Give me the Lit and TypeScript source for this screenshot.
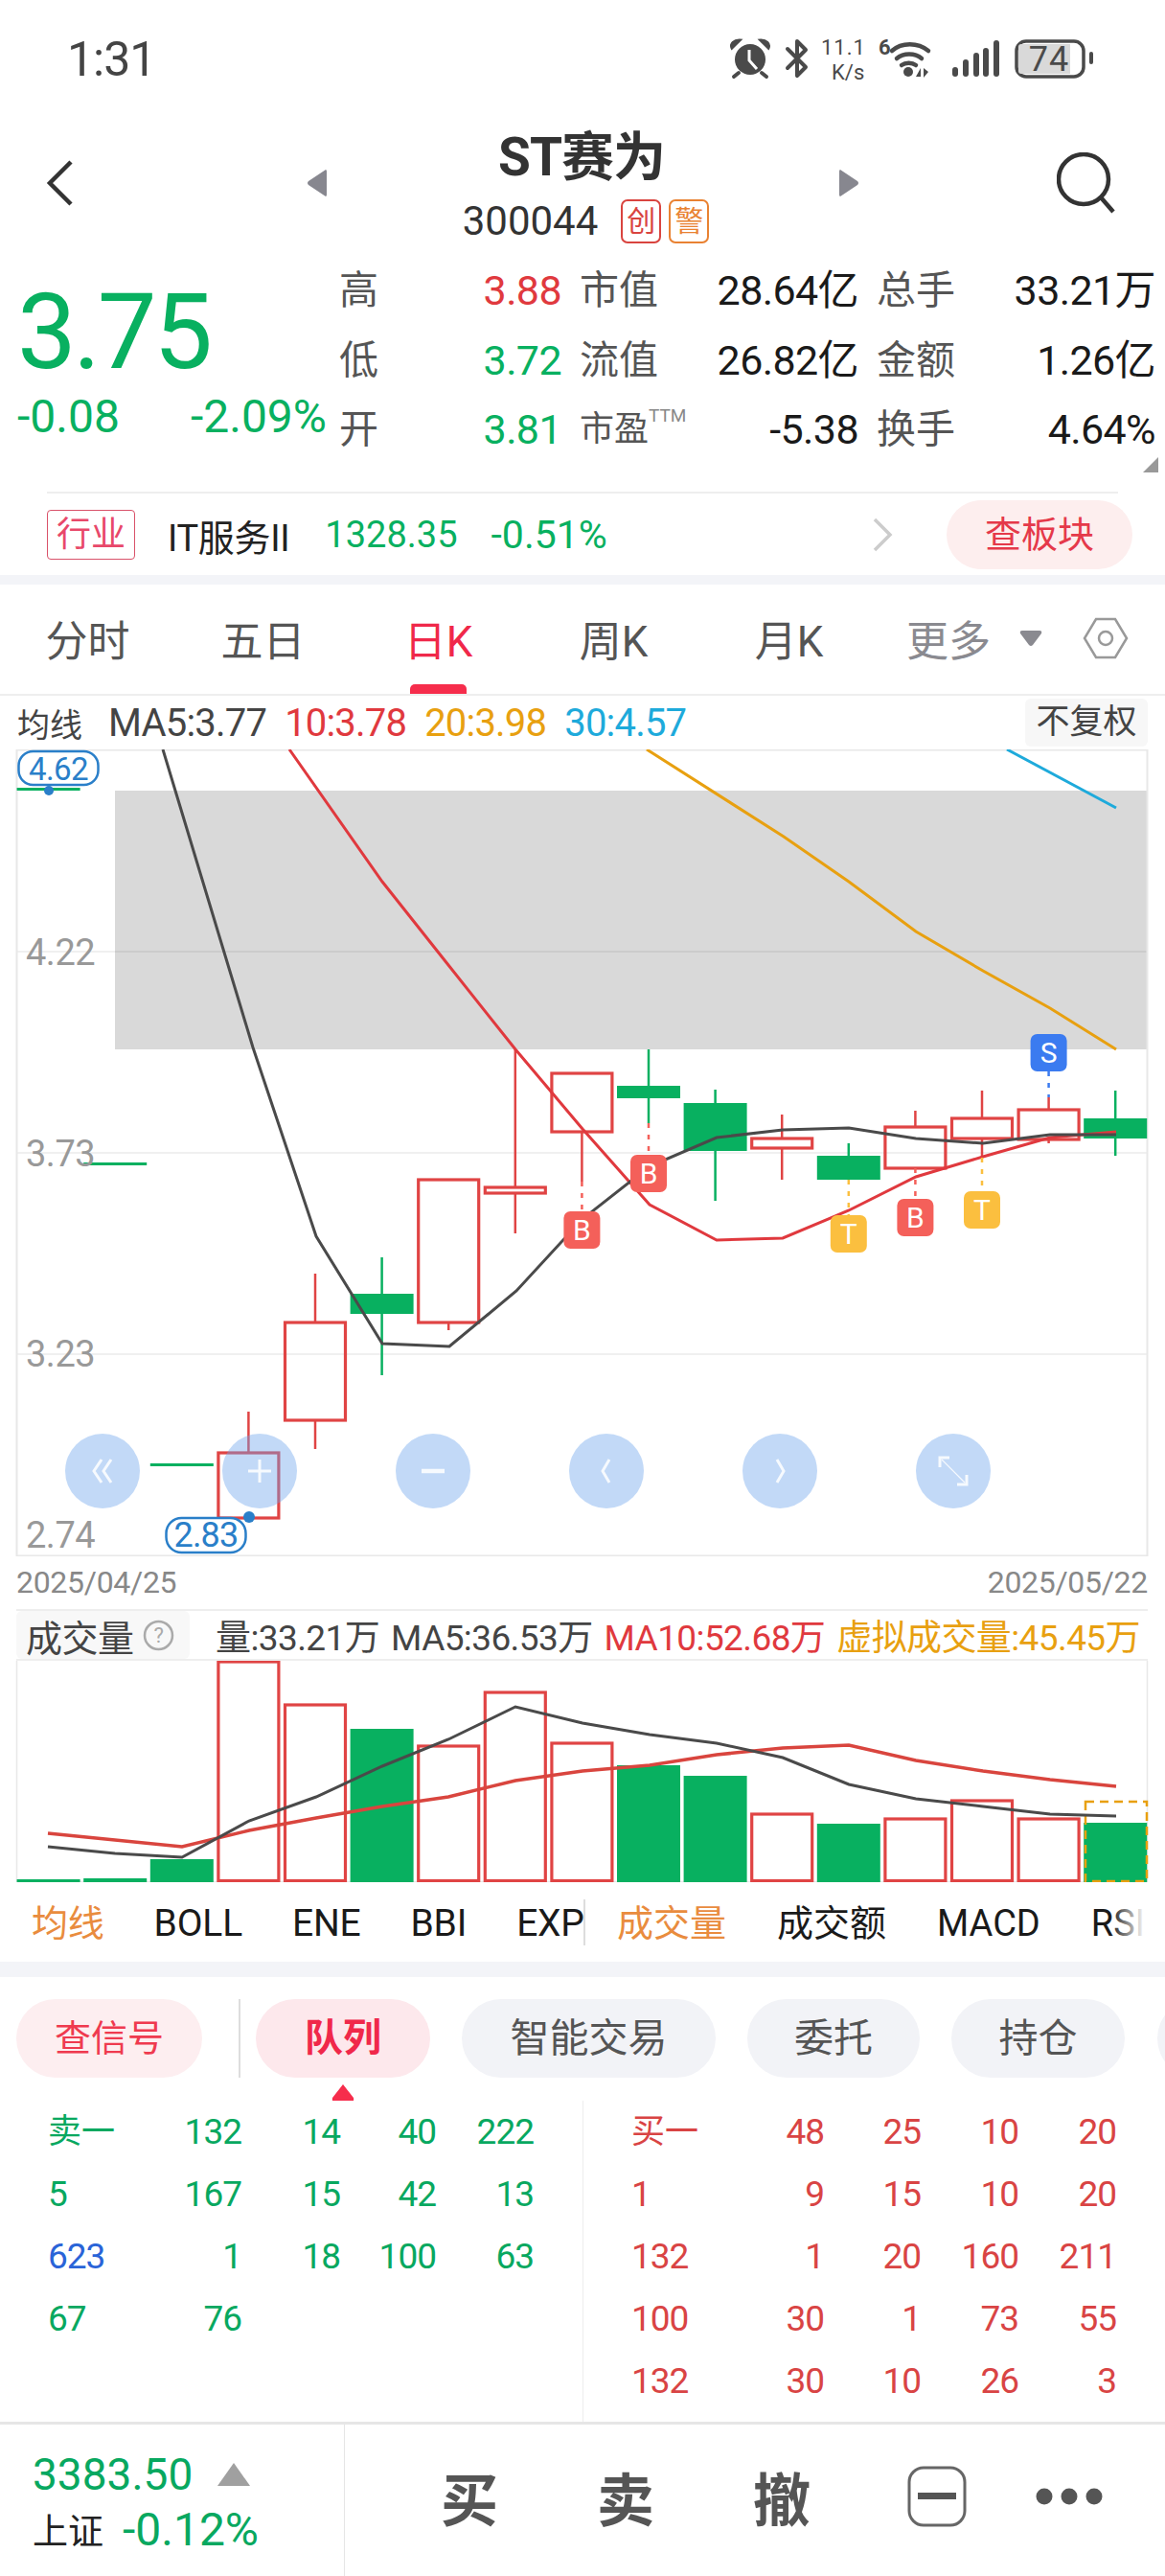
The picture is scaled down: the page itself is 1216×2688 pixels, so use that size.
import { LitElement, html, css, svg } from "lit";
import { customElement } from "lit/decorators.js";

const C = (i: number) => 50.6 + 69.6 * i;
const RED = "#e04444";
const GREEN = "#08b060";

// [index, hollow, bodyTop, bodyBottom, wickTop, wickBottom]
const candles: [number, boolean, number, number, number, number][] = [
  [0, false, 822, 825, 822, 825],
  [1, false, 1213, 1216, 1213, 1216],
  [2, false, 1527, 1530, 1527, 1530],
  [3, true, 1516, 1584, 1473, 1584],
  [4, true, 1380, 1482, 1329, 1512],
  [5, false, 1350, 1371, 1312, 1435],
  [6, true, 1231, 1380, 1231, 1388],
  [7, true, 1239, 1245, 1095, 1287],
  [8, true, 1120, 1181, 1120, 1233],
  [9, false, 1133, 1146, 1095, 1172],
  [10, false, 1151, 1201, 1137, 1253],
  [11, true, 1188, 1198, 1163, 1231],
  [12, false, 1206, 1231, 1193, 1231],
  [13, true, 1176, 1219, 1159, 1219],
  [14, true, 1167, 1188, 1138, 1208],
  [15, true, 1158, 1189, 1145, 1193],
  [16, false, 1167, 1188, 1138, 1206],
];

// [index, letter, top, colour, dotted from, dotted to]
const marks: [number, string, number, string, number, number][] = [
  [8, "B", 1264, "#f4605a", 1233, 1264],
  [9, "B", 1205, "#f4605a", 1172, 1205],
  [12, "T", 1268, "#fbbf3f", 1231, 1268],
  [13, "B", 1251, "#f4605a", 1219, 1251],
  [14, "T", 1243, "#fbbf3f", 1208, 1243],
  [15, "S", 1079, "#3b7bf0", 1118, 1145],
];

const ma5 = "170,782 264,1093 330,1290 399,1402 469,1405 539,1347 608,1272 678,1217 748,1187 817,1179 886,1177 956,1188 1026,1193 1096,1184 1165,1184";
const ma10 = "302,782 399,920 468,1007 538,1095 608,1178 678,1257 748,1294 817,1292 886,1263 956,1228 1026,1207 1096,1187 1165,1181";
const ma20 = "675,782 818,873 886,920 956,972 1026,1013 1096,1052 1165,1095";
const ma30 = "1051,782 1165,843";

const volTops: [number, boolean][] = [
  [1961, false], [1960, false], [1940, false], [1734, true], [1779, true], [1804, false],
  [1822, true], [1766, true], [1819, true], [1842, false], [1853, false], [1893, true],
  [1903, false], [1898, true], [1879, true], [1898, true], [1902, false],
];
const volMa5 = "50,1927 120,1934 190,1938 260,1900 330,1875 399,1843 468,1815 538,1781 608,1798 678,1810 748,1819 817,1834 886,1862 956,1877 1026,1885 1096,1893 1165,1895";
const volMa10 = "50,1913 120,1920 190,1927 260,1910 330,1897 399,1885 468,1875 538,1858 608,1848 678,1842 748,1831 817,1824 886,1821 956,1837 1026,1848 1096,1857 1165,1864";

const sellRows = [
  ["卖一", "132", "14", "40", "222"],
  ["5", "167", "15", "42", "13"],
  ["623", "1", "18", "100", "63"],
  ["67", "76", "", "", ""],
];
const buyRows = [
  ["买一", "48", "25", "10", "20"],
  ["1", "9", "15", "10", "20"],
  ["132", "1", "20", "160", "211"],
  ["100", "30", "1", "73", "55"],
  ["132", "30", "10", "26", "3"],
];

@customElement("app-root")
export class AppRoot extends LitElement {
  static styles = css`
    :host {
      display: block;
      width: 1216px;
      height: 2688px;
      overflow: hidden;
      background: #fff;
      font-family: Roboto, "Noto Sans CJK SC", sans-serif;
      color: #222;
    }
    svg { display: block; flex: none; }
    svg text { font-family: Roboto, "Noto Sans CJK SC", sans-serif; }
    .status { height: 88px; display: flex; justify-content: space-between; align-items: flex-start; padding: 30px 61px 0 70px; box-sizing: border-box; }
    .time { font-size: 50px; line-height: 64px; color: #444; letter-spacing: -1px; }

    .head { height: 179px; display: grid; grid-template-columns: 300px 616px 300px; }
    .head-l { display: flex; align-items: center; padding: 0 0 0 46px; height: 200px; box-sizing: border-box; }
    .head-l svg { margin-top: 6px; }
    .head-l .tri { margin-left: 242px; }
    .head-r { display: flex; justify-content: space-between; height: 200px; align-items: center; }
    .head-r .tri { margin-left: -41px; margin-top: 6px; }
    .head-r .search { margin: 6px 49px 0 0; }
    .head-c { display: flex; flex-direction: column; align-items: center; }
    .title { font-size: 55px; line-height: 60px; font-weight: 700; color: #333; margin-top: 46px; letter-spacing: -1px; margin-left: -2px; }
    .code-row { display: flex; align-items: center; gap: 8px; height: 46px; margin-top: 14px; margin-left: 7px; }
    .code { font-size: 42px; color: #333; margin-right: 16px; line-height: 46px; }
    .tag { width: 38px; height: 42px; border: 2px solid #d9443f; border-radius: 7px; color: #d9443f; font-size: 30px; line-height: 42px; text-align: center; }
    .tag.o { border-color: #e98232; color: #e98232; }

    .quote { height: 218px; display: flex; position: relative; }
    .price { width: 354px; flex: none; padding: 20px 0 0 18px; box-sizing: border-box; }
    .price-big { font-size: 110px; line-height: 120px; letter-spacing: -3.5px; color: #08b060; }
    .price-sub { display: flex; justify-content: space-between; width: 323px; margin: 3px 0 0 0; font-size: 48px; line-height: 50px; color: #08b060; }
    .qgrid { display: grid; grid-template-columns: 40px 192px 101px 209px 100px 210px; grid-auto-rows: 72.5px; align-items: center; font-size: 43px; line-height: 72px; letter-spacing: -0.6px; }
    .qgrid .l { color: #555; font-size: 41px; letter-spacing: 0; white-space: nowrap; }
    .qgrid .gap { padding-left: 19px; }
    .qgrid .v { text-align: right; color: #1a1a1a; white-space: nowrap; }
    .qgrid .v.r { color: #e0393e; }
    .qgrid .v.g { color: #08b060; }
    .qgrid .pe { font-size: 36px; }
    .qgrid .ttm { font-size: 19px; vertical-align: 20px; color: #888; line-height: 0; }
    .corner { position: absolute; right: 7px; top: 210px; width: 0; height: 0; border-left: 16px solid transparent; border-bottom: 16px solid #999; }

    .hr-wrap { height: 37px; padding: 28px 49px 0; box-sizing: border-box; }
    .hr { height: 2px; background: #eee; }
    .ind { height: 72px; margin-bottom: 6px; display: flex; align-items: center; padding: 0 34px 0 49px; font-size: 38px; }
    .ind .badge { width: 92px; height: 52px; border: 1px solid #d9526a; border-radius: 4px; color: #e8486a; font-size: 36px; line-height: 50px; text-align: center; box-sizing: border-box; }
    .ind .nm { margin-left: 34px; color: #222; letter-spacing: -0.3px; }
    .ind .n1 { margin-left: 37px; color: #08b060; }
    .ind .n2 { margin-left: 35px; color: #08b060; font-size: 41px; }
    .ind .chev { margin-left: auto; margin-right: 56px; }
    .ind .btn { width: 194px; height: 72px; border-radius: 36px; background: #fdeeee; color: #e5394a; font-size: 38px; line-height: 72px; text-align: center; }
    .band { background: #f3f4f8; }
    .band.b1 { height: 10px; }
    .band.b2 { height: 16px; }

    .tabs { height: 114px; display: flex; align-items: center; font-size: 44px; color: #555; position: relative; border-bottom: 2px solid #eee; }
    .tabs .t { width: 183px; text-align: center; line-height: 120px; height: 114px; }
    .tabs .on { color: #f0284a; }
    .tabs .ul { position: absolute; left: 428px; bottom: 0; width: 59px; height: 10px; border-radius: 5px 5px 0 0; background: #f62d4c; }
    .tabs .more { color: #8a8a90; margin-left: 31px; line-height: 120px; height: 114px; }
    .tabs .dn { margin-left: 30px; margin-top: -2px; }
    .tabs .hex { margin-left: 42px; margin-top: -2px; }

    .ma { height: 56px; display: flex; align-items: center; position: relative; font-size: 40px; padding-left: 18px; letter-spacing: -0.8px; white-space: nowrap; box-sizing: border-box; }
    .ma span { margin-right: 19px; }
    .ma .a { color: #444; margin-right: 27px; letter-spacing: 0; font-size: 34px; }
    .ma .pill { position: absolute; left: 1070px; top: 3px; width: 128px; height: 50px; border-radius: 6px; background: #f7f7f7; color: #444; font-size: 35px; line-height: 50px; text-align: center; margin: 0; letter-spacing: 0; }
    .c-b { color: #444; }
    .c-r { color: #e0393e; }
    .c-o { color: #e8a010; }
    .c-s { color: #1eaadb; }

    .chart { position: relative; height: 842px; }
    .nav { position: absolute; left: 0; top: 714px; width: 1216px; height: 78px; display: flex; padding-left: 68px; box-sizing: border-box; gap: 103px; }
    .nav div { width: 78px; height: 78px; border-radius: 50%; background: rgba(110, 165, 235, 0.42); display: flex; align-items: center; justify-content: center; flex: none; }
    .nav div:first-child { margin-right: -17px; }

    .dates { height: 55px; display: flex; justify-content: space-between; padding: 0 18px 0 17px; font-size: 32px; line-height: 54px; color: #888; letter-spacing: -0.3px; }
    .vh-wrap { padding: 0 18px 0 17px; }
    .vh { height: 54px; border-top: 2px solid #eee; border-bottom: 2px solid #eee; display: flex; align-items: center; font-size: 37px; white-space: nowrap; letter-spacing: -0.6px; box-sizing: border-box; }
    .vh .lb { height: 50px; width: 181px; flex: none; background: #f8f8f8; border-radius: 6px; display: flex; align-items: center; padding-left: 10px; box-sizing: border-box; color: #444; font-size: 38px; letter-spacing: -0.5px; gap: 9px; margin-right: 27px; }
    .vh span + span { margin-left: 12px; }

    .inds { height: 83px; display: flex; font-size: 39px; white-space: nowrap; color: #1a1a1a; letter-spacing: -0.2px; }
    .inds .a { width: 611px; flex: none; overflow: hidden; display: flex; gap: 52px; padding-left: 33px; box-sizing: border-box; height: 48px; margin-top: 18px; line-height: 50px; border-right: 2px solid #ddd; }
    .inds .a .o { font-size: 38px; }
    .inds .b { position: relative; width: 584px; overflow: hidden; display: flex; gap: 53px; padding-left: 33px; box-sizing: border-box; height: 48px; margin-top: 18px; line-height: 50px; font-size: 38px; letter-spacing: 0; }
    .inds .b::after { content: ""; position: absolute; right: 0; top: 0; bottom: 0; width: 36px; background: linear-gradient(to right, rgba(255,255,255,0), #fff); }
    .inds .o { color: #e98c3e; }

    .pills { height: 129px; display: flex; align-items: flex-start; padding: 23px 0 0 17px; box-sizing: border-box; font-size: 41px; overflow: hidden; position: relative; white-space: nowrap; }
    .pills div { height: 82px; border-radius: 41px; line-height: 82px; text-align: center; flex: none; background: #f2f3f7; color: #555; }
    .pills .sig { width: 194px; background: #fdeef0; color: #ef3a4f; font-size: 38px; }
    .pills .sep { width: 2px; background: #ddd; border-radius: 0; margin: 0 16px 0 38px; }
    .pills .act { width: 182px; background: #fde8ec; color: #f0284a; font-weight: 700; margin-right: 33px; font-size: 40px; }
    .pills .w1 { width: 265px; margin-right: 33px; }
    .pills .w2 { width: 180px; margin-right: 33px; }
    .pills .w3 { width: 181px; margin-right: 34px; }
    .pills .w4 { width: 100px; }
    .pills .ptr { position: absolute; left: 346px; top: 112px; width: 24px; height: 19px; background: none; border-radius: 0; }

    .queue { height: 335px; display: flex; font-size: 37px; letter-spacing: -1px; }
    .qs { width: 608px; flex: none; padding: 0 0 0 50px; box-sizing: border-box; }
    .qb { flex: 1; padding: 0 0 0 50px; box-sizing: border-box; border-left: 1px solid #eee; }
    .qrow { display: grid; height: 65px; line-height: 66px; }
    .qs .qrow { grid-template-columns: 100px 102px 103px 100px 102px; color: #08a860; }
    .qb .qrow { grid-template-columns: 100px 101px 101px 102px 102px; color: #d94444; }
    .qrow span { text-align: right; }
    .qrow span:first-child { text-align: left; }
    .qrow span.zh { font-size: 35px; letter-spacing: 0; }
    .qrow span.blue { color: #2a64d8; }

    .bottom { height: 161px; border-top: 3px solid #e6e6e6; display: flex; box-sizing: border-box; }
    .b-l { width: 360px; flex: none; border-right: 1px solid #e6e6e6; padding: 24px 0 0 34px; box-sizing: border-box; }
    .b-r1 { display: flex; align-items: center; height: 56px; gap: 26px; font-size: 46px; color: #08a860; }
    .b-r2 { display: flex; align-items: center; height: 56px; margin-top: 1px; font-size: 48px; color: #08a860; }
    .b-r2 b { font-weight: 400; color: #222; font-size: 37px; margin-right: 20px; }
    .b-a { display: flex; align-items: center; padding: 0 0 0 100px; height: 155px; gap: 103px; font-size: 60px; font-weight: 700; color: #555; margin-top: -3px; }
    .b-a .ic { margin-left: -2px; }
    .b-a .dots { margin-left: -31px; }
  `;

  private statusIcons() {
    const g = "#4a4a4a";
    return html`<svg width="400" height="60" viewBox="755 30 400 60">
      <g fill="${g}">
        <circle cx="783" cy="62" r="16" />
        <path d="M764 50a8 6 0 0 1 8-8l-8 8zM802 50a8 6 0 0 0-8-8l8 8z" stroke="${g}" stroke-width="3" />
        <path d="M771 76l-5 4M795 76l5 4" stroke="${g}" stroke-width="4" stroke-linecap="round" />
      </g>
      <path d="M782 52v11l8 9" fill="none" stroke="#fff" stroke-width="3" />
      <path d="M822 51l19 19-9 9V43l9 9-19 19" fill="none" stroke="${g}" stroke-width="4" stroke-linejoin="round" stroke-linecap="round" />
      <text x="857" y="57" font-size="22" fill="${g}" letter-spacing="1">11.1</text>
      <text x="868" y="83" font-size="22" fill="${g}">K/s</text>
      <text x="917" y="57" font-size="22" font-weight="700" fill="${g}">6</text>
      <g fill="none" stroke="${g}" stroke-width="4.5" stroke-linecap="round">
        <path d="M931 53c10-9 27-9 38 0" />
        <path d="M936 61c7-6 19-6 26 0" />
        <path d="M941 68c4-3 11-3 15 0" />
      </g>
      <circle cx="948" cy="75" r="5" fill="${g}" />
      <path d="M956 80h5v-9zM964 71v10l5-6z" fill="${g}" />
      <g fill="${g}">
        <rect x="994" y="70" width="6" height="10" rx="3" />
        <rect x="1005" y="62" width="6" height="18" rx="3" />
        <rect x="1016" y="55" width="6" height="25" rx="3" />
        <rect x="1026" y="50" width="6" height="30" rx="3" />
        <rect x="1037" y="42" width="6" height="38" rx="3" />
      </g>
      <rect x="1061" y="43" width="70" height="37" rx="10" fill="none" stroke="${g}" stroke-width="3.5" />
      <path d="M1066 46h51v31h-51q-3 0-3-3V49q0-3 3-3z" fill="#d9d9d9" />
      <text x="1095" y="74" font-size="36" text-anchor="middle" fill="${g}" letter-spacing="1">74</text>
      <rect x="1137" y="54" width="4" height="13" rx="2" fill="${g}" />
    </svg>`;
  }

  private chart() {
    return html`<svg width="1216" height="842" viewBox="0 782 1216 842">
      <rect x="120" y="825" width="1078" height="270" fill="#d9d9d9" />
      ${[993, 1203, 1413].map((y) => svg`<rect x="17" y="${y - 1}" width="1181" height="2" fill="#000" fill-opacity="0.06" />`)}
      <path d="M17.5 782V1623.5H1197.5V782M17 782.5H1198" fill="none" stroke="#e8e8e8" stroke-width="2" />
      ${candles.map(([i, hollow, t, b, wt, wb]) => {
        const c = C(i);
        const col = hollow ? RED : GREEN;
        return svg`
          ${wt < t ? svg`<line x1="${c}" x2="${c}" y1="${wt}" y2="${t}" stroke="${col}" stroke-width="2.5" />` : ""}
          ${wb > b ? svg`<line x1="${c}" x2="${c}" y1="${b}" y2="${wb}" stroke="${col}" stroke-width="2.5" />` : ""}
          ${hollow
            ? svg`<rect x="${c - 31.5}" y="${t}" width="63" height="${b - t}" fill="none" stroke="${col}" stroke-width="3.2" />`
            : svg`<rect x="${c - 33}" y="${t}" width="66" height="${b - t}" fill="${col}" />`}`;
      })}
      <polyline points="${ma30}" fill="none" stroke="#1eaadb" stroke-width="3" />
      <polyline points="${ma20}" fill="none" stroke="#e8a010" stroke-width="3" />
      <polyline points="${ma10}" fill="none" stroke="#e0393e" stroke-width="3" />
      <polyline points="${ma5}" fill="none" stroke="#4a4a4a" stroke-width="3" />
      ${marks.map(([i, l, top, col, d1, d2]) => {
        const c = C(i);
        return svg`
          <line x1="${c}" x2="${c}" y1="${d1}" y2="${d2}" stroke="${col}" stroke-width="2.5" stroke-dasharray="5 7" />
          <rect x="${c - 19}" y="${top}" width="38" height="39" rx="7" fill="${col}" />
          <text x="${c}" y="${top + 30}" font-size="30" fill="#fff" text-anchor="middle">${l}</text>`;
      })}
      ${[["4.22", 1007], ["3.73", 1217], ["3.23", 1426], ["2.74", 1615]].map(
        ([t, y]) => svg`<text x="27" y="${y}" font-size="38" fill="#999" letter-spacing="-0.5">${t}</text>`
      )}
      <rect x="19.5" y="784" width="83" height="35" rx="15" fill="#fff" stroke="#2a7fc9" stroke-width="2.5" />
      <text x="61" y="814" font-size="33" fill="#2a7fc9" text-anchor="middle" letter-spacing="-0.6">4.62</text>
      <circle cx="51" cy="825" r="5" fill="#2a7fc9" />
      <rect x="173.5" y="1584" width="83" height="36" rx="16" fill="#fff" stroke="#2a7fc9" stroke-width="2.5" />
      <text x="215" y="1614" font-size="36" fill="#2a7fc9" text-anchor="middle" letter-spacing="-0.8">2.83</text>
      <circle cx="260" cy="1583" r="6" fill="#2a7fc9" />
    </svg>`;
  }

  private volume() {
    return html`<svg width="1216" height="231" viewBox="0 1733 1216 231">
      <path d="M17.5 1733V1963.5H1197.5V1733" fill="none" stroke="#e8e8e8" stroke-width="1.5" />
      ${volTops.map(([t, hollow], i) => {
        const c = C(i);
        return hollow
          ? svg`<rect x="${c - 31.5}" y="${t}" width="63" height="${1962.5 - t}" fill="none" stroke="${RED}" stroke-width="3.2" />`
          : svg`<rect x="${c - 33}" y="${t}" width="66" height="${1964 - t}" fill="${GREEN}" />`;
      })}
      <rect x="1133" y="1880" width="64" height="83" fill="none" stroke="#e8a010" stroke-width="2.5" stroke-dasharray="9 6" />
      <polyline points="${volMa10}" fill="none" stroke="#d9453e" stroke-width="3.5" />
      <polyline points="${volMa5}" fill="none" stroke="#4a4a4a" stroke-width="3" />
    </svg>`;
  }

  private queueRow(r: string[], blue = false) {
    return html`<div class="qrow">
      ${r.map((v, i) => html`<span class="${i === 0 && v.length === 2 && !/\d/.test(v) ? "zh" : ""} ${i === 0 && blue ? "blue" : ""}">${v}</span>`)}
    </div>`;
  }

  render() {
    const navIcons = [
      svg`<path d="M16 5L8 17l8 12M26 5l-8 12 8 12" />`,
      svg`<path d="M17 5v24M5 17h24" />`,
      svg`<path d="M5 17h24" stroke-width="4.5" />`,
      svg`<path d="M20 5l-7 12 7 12" />`,
      svg`<path d="M14 5l7 12-7 12" />`,
      svg`<path d="M3 13V3h10M31 21v10H21" /><path d="M5 5l24 24" stroke-width="1.2" />`,
    ];
    return html`
      <div class="status">
        <div class="time">1:31</div>
        ${this.statusIcons()}
      </div>

      <div class="head">
        <div class="head-l">
          <svg width="32" height="50" viewBox="0 0 32 50"><path d="M28 3L6 25l22 22" fill="none" stroke="#333" stroke-width="4.5" /></svg>
          <svg class="tri" width="22" height="30" viewBox="0 0 22 30"><path d="M20 1a2 2 0 0 1 1 2v24a2 2 0 0 1-1 2L2 17q-2-2 0-4z" fill="#87878f" /></svg>
        </div>
        <div class="head-c">
          <div class="title">ST赛为</div>
          <div class="code-row">
            <span class="code">300044</span>
            <span class="tag">创</span>
            <span class="tag o">警</span>
          </div>
        </div>
        <div class="head-r">
          <svg class="tri" width="22" height="30" viewBox="0 0 22 30"><path d="M2 1a2 2 0 0 0-1 2v24a2 2 0 0 0 1 2L20 17q2-2 0-4z" fill="#87878f" /></svg>
          <svg class="search" width="64" height="64" viewBox="0 0 64 64"><circle cx="28" cy="28" r="26" fill="none" stroke="#333" stroke-width="4.5" /><path d="M46 47l13 15" stroke="#333" stroke-width="4.5" /></svg>
        </div>
      </div>

      <div class="quote">
        <div class="price">
          <div class="price-big">3.75</div>
          <div class="price-sub"><span>-0.08</span><span>-2.09%</span></div>
        </div>
        <div class="qgrid">
          <span class="l">高</span><span class="v r">3.88</span><span class="l gap">市值</span><span class="v">28.64亿</span><span class="l gap">总手</span><span class="v">33.21万</span>
          <span class="l">低</span><span class="v g">3.72</span><span class="l gap">流值</span><span class="v">26.82亿</span><span class="l gap">金额</span><span class="v">1.26亿</span>
          <span class="l">开</span><span class="v g">3.81</span><span class="l gap pe">市盈<span class="ttm">TTM</span></span><span class="v">-5.38</span><span class="l gap">换手</span><span class="v">4.64%</span>
        </div>
        <div class="corner"></div>
      </div>

      <div class="hr-wrap"><div class="hr"></div></div>

      <div class="ind">
        <div class="badge">行业</div>
        <span class="nm">IT服务II</span>
        <span class="n1">1328.35</span>
        <span class="n2">-0.51%</span>
        <svg class="chev" width="22" height="36" viewBox="0 0 22 36"><path d="M3 2l16 16-16 16" fill="none" stroke="#ccc" stroke-width="3.5" /></svg>
        <div class="btn">查板块</div>
      </div>
      <div class="band b1"></div>

      <div class="tabs">
        <div class="t">分时</div>
        <div class="t">五日</div>
        <div class="t on">日K</div>
        <div class="t">周K</div>
        <div class="t">月K</div>
        <div class="more">更多</div>
        <svg class="dn" width="24" height="18" viewBox="0 0 24 18"><path d="M3 1h18q3 0 2 3L14 16q-2 2-4 0L1 4Q0 1 3 1z" fill="#8a8a90" /></svg>
        <svg class="hex" width="48" height="44" viewBox="0 0 48 44"><path d="M14 2h20l12 20-12 20H14L2 22z" fill="none" stroke="#999" stroke-width="2.5" /><circle cx="24" cy="22" r="7" fill="none" stroke="#999" stroke-width="2.5" /></svg>
        <div class="ul"></div>
      </div>

      <div class="ma">
        <span class="a">均线</span>
        <span class="c-b">MA5:3.77</span>
        <span class="c-r">10:3.78</span>
        <span class="c-o">20:3.98</span>
        <span class="c-s">30:4.57</span>
        <span class="pill">不复权</span>
      </div>

      <div class="chart">
        ${this.chart()}
        <div class="nav">
          ${navIcons.map(
            (p) => html`<div><svg width="34" height="34" viewBox="0 0 34 34" fill="none" stroke="#fff" stroke-width="3" stroke-opacity="0.85">${p}</svg></div>`
          )}
        </div>
      </div>

      <div class="dates"><span>2025/04/25</span><span>2025/05/22</span></div>

      <div class="vh-wrap">
        <div class="vh">
          <div class="lb">成交量
            <svg width="33" height="33" viewBox="0 0 33 33"><circle cx="16.5" cy="16.5" r="14.5" fill="none" stroke="#aaa" stroke-width="2.5" /><text x="16.5" y="24" font-size="22" fill="#aaa" text-anchor="middle">?</text></svg>
          </div>
          <span class="c-b">量:33.21万</span>
          <span class="c-b">MA5:36.53万</span>
          <span class="c-r">MA10:52.68万</span>
          <span class="c-o">虚拟成交量:45.45万</span>
        </div>
      </div>
      ${this.volume()}

      <div class="inds">
        <div class="a"><span class="o">均线</span><span>BOLL</span><span>ENE</span><span>BBI</span><span>EXP</span></div>
        <div class="b"><span class="o">成交量</span><span>成交额</span><span>MACD</span><span>RSI</span></div>
      </div>
      <div class="band b2"></div>

      <div class="pills">
        <div class="sig">查信号</div>
        <div class="sep"></div>
        <div class="act">队列</div>
        <div class="w1">智能交易</div>
        <div class="w2">委托</div>
        <div class="w3">持仓</div>
        <div class="w4"></div>
        <div class="ptr"><svg width="24" height="19" viewBox="0 0 24 19"><path d="M12 0l11 14q1 5-4 5H5q-5 0-4-5z" fill="#f62d4c" /></svg></div>
      </div>

      <div class="queue">
        <div class="qs">${sellRows.map((r, i) => this.queueRow(r, i === 2))}</div>
        <div class="qb">${buyRows.map((r) => this.queueRow(r))}</div>
      </div>

      <div class="bottom">
        <div class="b-l">
          <div class="b-r1"><span>3383.50</span><svg width="34" height="24" viewBox="0 0 34 24"><path d="M17 0l17 24H0z" fill="#a0a0a0" /></svg></div>
          <div class="b-r2"><b>上证</b><span>-0.12%</span></div>
        </div>
        <div class="b-a">
          <span>买</span><span>卖</span><span>撤</span>
          <svg class="ic" width="62" height="64" viewBox="0 0 62 64"><rect x="2" y="2" width="58" height="60" rx="15" fill="none" stroke="#666" stroke-width="3" /><rect x="11" y="28" width="40" height="7" fill="#555" /></svg>
          <svg class="dots" width="70" height="20" viewBox="0 0 70 20"><circle cx="9" cy="10" r="8.5" fill="#555" /><circle cx="35" cy="10" r="8.5" fill="#555" /><circle cx="61" cy="10" r="8.5" fill="#555" /></svg>
        </div>
      </div>
    `;
  }
}
